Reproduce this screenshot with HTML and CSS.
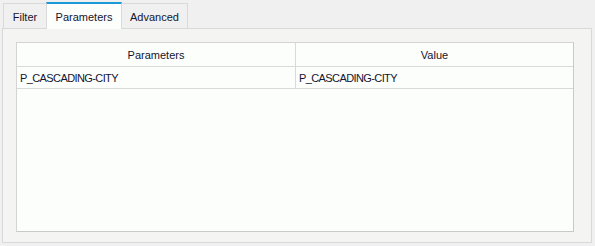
FILE: index.html
```html
<!DOCTYPE html>
<html lang="en">
<head>
    <meta charset="UTF-8">
    <title>Parameters</title>
    <link rel="stylesheet" href="styles.css">
</head>
<body>
<div class="dialog">
    <div class="tabs">
        <div class="tab tab-filter">Filter</div>
        <div class="tab tab-params active">Parameters</div>
        <div class="tab tab-advanced">Advanced</div>
    </div>
    <div class="panel">
        <div class="grid">
            <div class="grid-row grid-head">
                <div class="cell cell-name">Parameters</div>
                <div class="cell cell-value">Value</div>
            </div>
            <div class="grid-row">
                <div class="cell cell-name">P_CASCADING-CITY</div>
                <div class="cell cell-value">P_CASCADING-CITY</div>
            </div>
        </div>
    </div>
</div>
</body>
</html>
```

FILE: styles.css
```css
:root {
    --page-bg: #f0f0f0;
    --panel-bg: #f4f4f2;
    --white-bg: #fcfefc;
    --line: #d9d9d9;
    --text-color: #14142e;
    --accent: #1a9ad6;
}
body {
    margin: 0;
    width: 595px;
    height: 246px;
    background-color: var(--page-bg);
    font-family: 'Liberation Sans', Arial, sans-serif;
    font-size: 11px;
    color: var(--text-color);
}
.dialog {
    padding: 2px 3px 0 2px;
}
.tabs {
    display: flex;
    align-items: flex-end;
    height: 26px;
    padding-left: 1px;
}
.tab {
    box-sizing: border-box;
    height: 25px;
    border: 1px solid var(--line);
    border-bottom: none;
    margin-right: -1px;
    display: flex;
    align-items: center;
    justify-content: center;
    padding-top: 1px;
}
.tab-filter { width: 44px; }
.tab-params { width: 76px; }
.tab-advanced { width: 67px; }
.tab.active {
    height: 27px;
    margin-bottom: -1px;
    border-top: 2px solid var(--accent);
    background-color: var(--white-bg);
    position: relative;
    z-index: 1;
    padding-top: 0;
}
.panel {
    box-sizing: border-box;
    height: 215px;
    border: 1px solid var(--line);
    background-color: var(--panel-bg);
    padding: 13px 17px 10px 13px;
}
.grid {
    box-sizing: border-box;
    height: 100%;
    background-color: var(--white-bg);
    border: 1px solid #d4d4d4;
    border-right-color: #c9c9c9;
    border-bottom-color: #c9c9c9;
}
.grid-row {
    display: flex;
    height: 21px;
    border-bottom: 1px solid var(--line);
}
.grid-head {
    height: 23px;
}
.cell {
    box-sizing: border-box;
    display: flex;
    align-items: center;
    padding-left: 3px;
    letter-spacing: -0.6px;
}
.cell-name {
    width: 279px;
    border-right: 1px solid var(--line);
}
.cell-value {
    flex: 1;
}
.grid-head .cell {
    justify-content: center;
    padding-left: 0;
    letter-spacing: 0;
}
```
